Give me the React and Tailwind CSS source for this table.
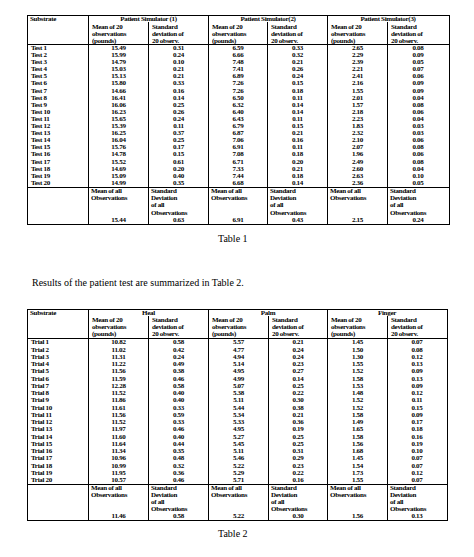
import React from "react";

const table1 = {
  label: "Test",
  cols: "grid-cols-[60px_60px_60px_59px_60px_60px_61px]",
  groups: ["Patient Simulator (1)", "Patient Simulator(2)", "Patient Simulator(3)"],
  data: [
    ["15.49", "15.99", "14.79", "15.03", "15.13", "15.80", "14.66", "16.41", "16.06", "16.23", "15.65", "15.39", "16.25", "16.04", "15.76", "14.78", "15.52", "14.69", "15.09", "14.99"],
    ["0.31", "0.24", "0.10", "0.21", "0.21", "0.33", "0.16", "0.14", "0.25", "0.26", "0.24", "0.11", "0.37", "0.25", "0.17", "0.15", "0.61", "0.20", "0.40", "0.35"],
    ["6.59", "6.66", "7.48", "7.41", "6.89", "7.26", "7.26", "6.50", "6.32", "6.40", "6.43", "6.79", "6.87", "7.06", "6.91", "7.08", "6.71", "7.33", "7.44", "6.68"],
    ["0.33", "0.32", "0.21", "0.26", "0.24", "0.15", "0.18", "0.11", "0.14", "0.14", "0.11", "0.15", "0.21", "0.16", "0.11", "0.18", "0.20", "0.21", "0.18", "0.14"],
    ["2.65", "2.29", "2.39", "2.21", "2.41", "2.16", "1.55", "2.01", "1.57", "2.18", "2.23", "1.83", "2.32", "2.10", "2.07", "1.96", "2.49", "2.60", "2.63", "2.36"],
    ["0.08", "0.09", "0.05", "0.07", "0.06", "0.09", "0.09", "0.04", "0.08", "0.06", "0.04", "0.03", "0.03", "0.06", "0.08", "0.06", "0.08", "0.04", "0.10", "0.05"],
  ],
  summary: ["15.44", "0.63", "6.91", "0.43", "2.15", "0.24"],
};

const table2 = {
  label: "Trial",
  cols: "grid-cols-[60px_60px_60px_60px_59px_60px_59px]",
  groups: ["Heal", "Palm", "Finger"],
  data: [
    ["10.82", "11.02", "11.31", "11.22", "11.56", "11.59", "12.28", "11.52", "11.86", "11.61", "11.56", "11.52", "11.97", "11.60", "11.64", "11.34", "10.96", "10.99", "11.95", "10.57"],
    ["0.58", "0.42", "0.24", "0.49", "0.38", "0.46", "0.58", "0.40", "0.40", "0.33", "0.59", "0.33", "0.46", "0.40", "0.44", "0.35", "0.48", "0.32", "0.36", "0.46"],
    ["5.57", "4.77", "4.94", "5.14", "4.95", "4.99", "5.07", "5.38", "5.11", "5.44", "5.34", "5.33", "4.95", "5.27", "5.45", "5.11", "5.46", "5.22", "5.29", "5.71"],
    ["0.21", "0.24", "0.24", "0.23", "0.27", "0.14", "0.25", "0.22", "0.30", "0.38", "0.21", "0.36", "0.19", "0.25", "0.25", "0.31", "0.29", "0.23", "0.22", "0.16"],
    ["1.45", "1.50", "1.30", "1.55", "1.52", "1.58", "1.53", "1.48", "1.52", "1.52", "1.58", "1.49", "1.65", "1.58", "1.56", "1.68", "1.45", "1.54", "1.73", "1.55"],
    ["0.07", "0.08", "0.12", "0.13", "0.09", "0.13", "0.09", "0.12", "0.11", "0.15", "0.09", "0.17", "0.18", "0.16", "0.19", "0.10", "0.07", "0.07", "0.12", "0.07"],
  ],
  summary: ["11.46", "0.58", "5.22", "0.30", "1.56", "0.13"],
};

function DataTable({ t, width, subHead, rowLead, sumHead, sumLead }) {
  const labels = Array.from({ length: 20 }, (_, i) => `${t.label} ${i + 1}`);
  return (
    <div className={`${width} border-[1.5px] border-black text-[7px] font-bold leading-none tracking-[-0.3px] text-black`}>
      {/* header */}
      <div className={`grid ${t.cols} border-b-[1.5px] border-black`}>
        <div className="row-span-2 pl-[2px] leading-[6px]">Substrate</div>
        {t.groups.map((g) => (
          <div key={g} className="col-span-2 h-[6px] border-l border-black text-center leading-[6px]">
            {g}
          </div>
        ))}
        {t.groups.map((g) => (
          <React.Fragment key={g + "s"}>
            <div className={`border-l border-black pl-[3px] ${subHead}`}>
              Mean of 20<br />observations<br />(pounds)
            </div>
            <div className={`border-l border-black pl-[3px] ${subHead}`}>
              Standard<br />deviation of<br />20 observ.
            </div>
          </React.Fragment>
        ))}
      </div>

      {/* body */}
      <div className={`grid ${t.cols} ${rowLead}`}>
        <div className="pl-[3px]">
          {labels.map((l) => (
            <div key={l}>{l}</div>
          ))}
        </div>
        {t.data.map((col, ci) => (
          <div key={ci} className="border-l border-black text-center">
            {col.map((v, ri) => (
              <div key={ri}>{v}</div>
            ))}
          </div>
        ))}
      </div>

      {/* summary */}
      <div className={`grid ${t.cols} border-t-[1.5px] border-black ${sumLead}`}>
        <div className={sumHead} />
        {t.summary.map((v, i) => (
          <div key={i} className={`flex flex-col justify-between border-l border-black ${sumHead}`}>
            <div className="pl-[2px]">
              {i % 2 === 0 ? (
                <>Mean of all<br />Observations</>
              ) : (
                <>Standard<br />Deviation<br />of all<br />Observations</>
              )}
            </div>
            <div className="text-center">{v}</div>
          </div>
        ))}
      </div>
    </div>
  );
}

export default function App() {
  return (
    <div className="h-[557px] w-[474px] overflow-hidden bg-white pt-[15px] font-['Liberation_Serif',serif] text-black">
      <div className="ml-[27px]">
        <DataTable
          t={table1}
          width="w-[423px]"
          subHead="h-[22px] pt-[1.5px] leading-[7px]"
          rowLead="leading-[7.1px]"
          sumHead="h-[36px]"
          sumLead="leading-[7.3px]"
        />
      </div>
      <div className="mt-[8px] pl-[218px] text-[10px] leading-[12px]">Table 1</div>

      <p className="ml-[32px] mt-[32px] text-[10px] leading-[12px]">
        Results of the patient test are summarized in Table 2.
      </p>

      <div className="ml-[27px] mt-[20px]">
        <DataTable
          t={table2}
          width="w-[421px]"
          subHead="h-[22.5px] pt-[1.5px] leading-[7px]"
          rowLead="leading-[7.25px]"
          sumHead="h-[35px]"
          sumLead="leading-[7px]"
        />
      </div>
      <div className="mt-[7px] pl-[218px] text-[10px] leading-[12px]">Table 2</div>
    </div>
  );
}
